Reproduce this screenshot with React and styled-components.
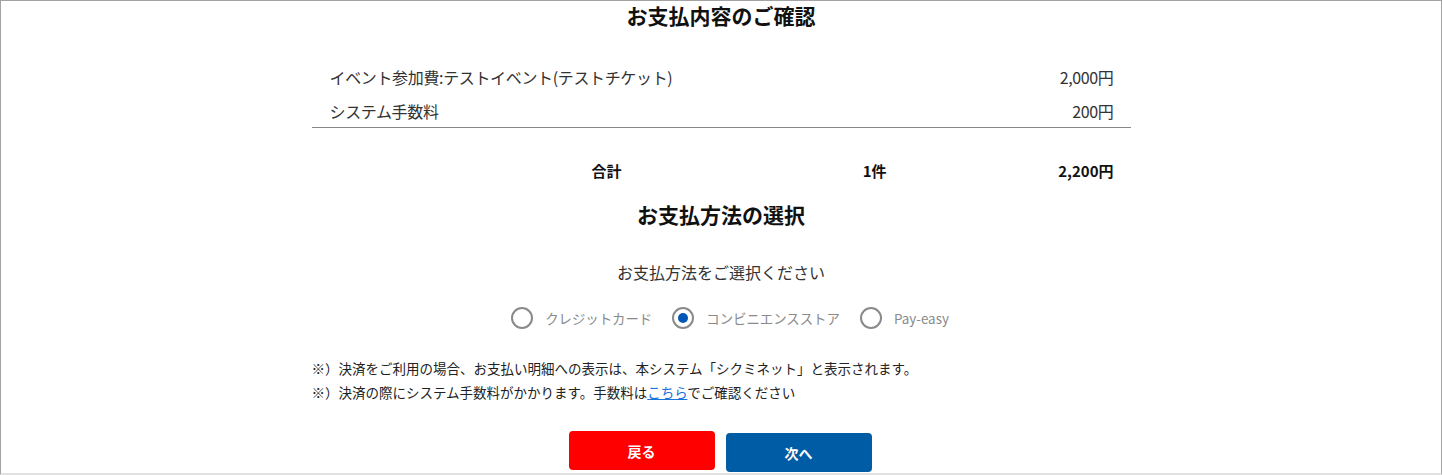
import React, { useState } from "react";
import styled, { createGlobalStyle } from "styled-components";

const GlobalStyle = createGlobalStyle`
  html, body {
    margin: 0;
    padding: 0;
    background: #fff;
  }
  body {
    font-family: "Noto Sans CJK JP", "Noto Sans", sans-serif;
    color: #333;
  }
`;

const Frame = styled.div`
  width: 1442px;
  height: 475px;
  box-sizing: border-box;
  border: 1px solid #a3a3a3;
  border-bottom: 2px solid #e2e2e2;
  overflow: hidden;
  display: flex;
  justify-content: center;
`;

const Content = styled.div`
  width: 819px;
  display: flex;
  flex-direction: column;
  margin-top: -1px;
`;

const Heading = styled.h2`
  margin: ${(p) => p.$mt || 0}px 0 0;
  font-size: 21px;
  font-weight: 700;
  line-height: 30px;
  text-align: center;
  color: #111;
`;

const ItemList = styled.div`
  margin-top: 30px;
  border-bottom: 1px solid #888;
`;

const ItemRow = styled.div`
  display: flex;
  justify-content: space-between;
  align-items: center;
  height: ${(p) => p.$h || 34}px;
  padding: 0 17px 0 18px;
  font-size: 16px;
  letter-spacing: -0.35px;
  color: #333;
`;

const TotalRow = styled.div`
  margin-top: 25px;
  display: grid;
  grid-template-columns: 310px 265px 1fr;
  align-items: center;
  height: 34px;
  padding-right: 17px;
  font-size: 15px;
  font-weight: 700;
  color: #111;
  text-align: right;
`;

const Prompt = styled.p`
  margin: 31px 0 0;
  font-size: 16px;
  line-height: 24px;
  text-align: center;
  color: #333;
`;

const RadioGroup = styled.div`
  margin-top: 22px;
  display: flex;
  justify-content: center;
  gap: 20px;
  height: 24px;
  padding-left: 18px;
`;

const RadioLabel = styled.label`
  display: flex;
  align-items: center;
  gap: 12px;
  font-size: 13.4px;
  color: #8a8a8a;
  cursor: pointer;
`;

const Circle = styled.span`
  width: 22px;
  height: 22px;
  box-sizing: border-box;
  border-radius: 50%;
  border: 2px solid #8a8a8a;
  display: flex;
  align-items: center;
  justify-content: center;
  &::after {
    content: "";
    width: 10px;
    height: 10px;
    border-radius: 50%;
    background: ${(p) => (p.$checked ? "#0057b3" : "transparent")};
  }
`;

const Notes = styled.div`
  margin-top: 26px;
  font-size: 13.5px;
  line-height: 24px;
  color: #222;
`;

const Note = styled.p`
  margin: 0;
`;

const NoteLink = styled.a`
  color: #1a73d9;
  text-decoration: underline;
`;

const Buttons = styled.div`
  margin-top: 27px;
  display: flex;
  justify-content: center;
  align-items: flex-start;
  gap: 11px;
  padding-right: 2px;
`;

const Button = styled.button`
  width: 146px;
  height: 39px;
  margin-top: ${(p) => p.$offset || 0}px;
  border: none;
  border-radius: 4px;
  background: ${(p) => p.$bg};
  color: #fff;
  font-family: "Noto Sans CJK JP", sans-serif;
  font-size: 14px;
  font-weight: 700;
  cursor: pointer;
`;

const methods = ["クレジットカード", "コンビニエンスストア", "Pay-easy"];

export default function App() {
  const [method, setMethod] = useState(1);
  return (
    <>
      <GlobalStyle />
      <Frame>
        <Content>
          <Heading>お支払内容のご確認</Heading>
          <ItemList>
            <ItemRow>
              <span>イベント参加費:テストイベント(テストチケット)</span>
              <span>2,000円</span>
            </ItemRow>
            <ItemRow $h={33}>
              <span>システム手数料</span>
              <span>200円</span>
            </ItemRow>
          </ItemList>
          <TotalRow>
            <span>合計</span>
            <span>1件</span>
            <span>2,200円</span>
          </TotalRow>
          <Heading $mt={12}>お支払方法の選択</Heading>
          <Prompt>お支払方法をご選択ください</Prompt>
          <RadioGroup>
            {methods.map((m, i) => (
              <RadioLabel key={m} onClick={() => setMethod(i)}>
                <Circle $checked={method === i} />
                {m}
              </RadioLabel>
            ))}
          </RadioGroup>
          <Notes>
            <Note>※）決済をご利用の場合、お支払い明細への表示は、本システム「シクミネット」と表示されます。</Note>
            <Note>
              ※）決済の際にシステム手数料がかかります。手数料は<NoteLink href="#">こちら</NoteLink>でご確認ください
            </Note>
          </Notes>
          <Buttons>
            <Button $bg="#ff0000">戻る</Button>
            <Button $bg="#005ca4" $offset={2}>次へ</Button>
          </Buttons>
        </Content>
      </Frame>
    </>
  );
}
